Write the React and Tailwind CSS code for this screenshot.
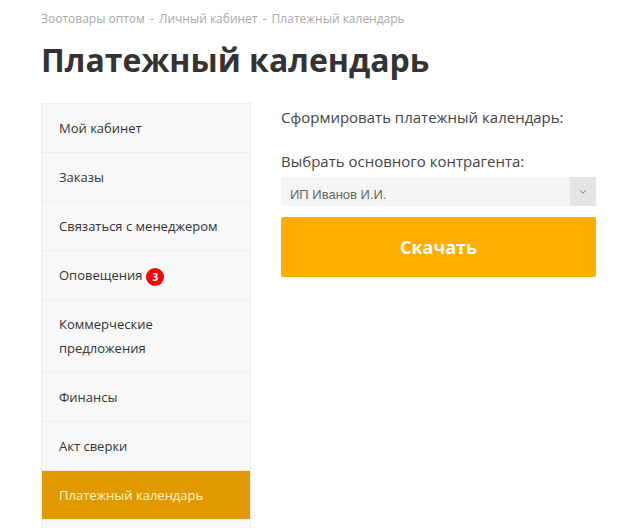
import { ChevronDown } from 'lucide-react';

const MENU = [
  { label: 'Мой кабинет' },
  { label: 'Заказы' },
  { label: 'Связаться с менеджером' },
  { label: 'Оповещения', badge: 3 },
  { label: 'Коммерческие предложения', wrap: true },
  { label: 'Финансы' },
  { label: 'Акт сверки' },
  { label: 'Платежный календарь', active: true },
];

function Sidebar() {
  return (
    <ul className="w-[210px] shrink-0 border border-[#eeeeee] bg-[#f8f8f8]">
      {MENU.map((item) => (
        <li
          key={item.label}
          className={`border-b border-[#eeeeee] py-3 pl-[17px] pr-4 text-[13px] leading-6 ${
            item.active ? 'bg-[#e09a00] text-[#fff3c8]' : 'text-[#333333]'
          }`}
        >
          <span className={item.wrap ? 'block w-[120px]' : ''}>{item.label}</span>
          {item.badge && (
            <span className="ml-1 inline-flex h-[18px] w-[18px] items-center justify-center rounded-full bg-[#ff0000] align-middle text-[10px] font-bold leading-none text-white">
              {item.badge}
            </span>
          )}
        </li>
      ))}
      {/* next item is below the fold */}
      <li className="h-[49px]" />
    </ul>
  );
}

export default function App() {
  return (
    <div
      className="h-[528px] overflow-hidden bg-white pl-[41px] pr-[36px] pt-[11px]"
      style={{ fontFamily: '"Open Sans", "Noto Sans", sans-serif' }}
    >
      <nav className="text-[12px] leading-4 text-[#a8a8a8]">
        Зоотовары оптом <span className="mx-0.5">-</span> Личный кабинет{' '}
        <span className="mx-0.5">-</span> Платежный календарь
      </nav>

      <h1 className="mt-[13px] text-[32px] font-bold leading-10 text-[#333333]">Платежный календарь</h1>

      <div className="mt-[23px] flex gap-[30px]">
        <Sidebar />

        <div className="w-[315px] shrink-0 pt-[2px]">
          <p className="text-[15px] leading-6 text-[#444444]">Сформировать платежный календарь:</p>

          <p className="mt-5 text-[15px] leading-6 text-[#444444]">Выбрать основного контрагента:</p>

          <div className="mt-[4px] flex h-[29px] bg-[#f5f5f5]">
            <div
              className="flex flex-1 items-end pb-[2px] pl-[9px] text-[13px] text-[#666666]"
              style={{ fontFamily: '"Liberation Sans", Arial, sans-serif' }}
            >
              ИП Иванов И.И.
            </div>
            <div className="flex w-[26px] items-center justify-center bg-[#e5e5e5] text-[#555555]">
              <ChevronDown size={10} strokeWidth={2} />
            </div>
          </div>

          <button
            type="button"
            className="mt-[11px] flex h-[60px] w-full items-center justify-center rounded-[2px] bg-[#ffad00] text-[18px] font-bold text-white"
          >
            Скачать
          </button>
        </div>
      </div>
    </div>
  );
}
